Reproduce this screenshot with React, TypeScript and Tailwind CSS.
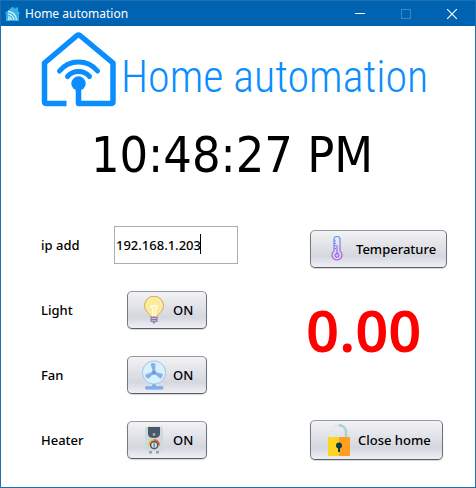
import type { ReactNode } from "react";

const labelFont = "font-['Noto_Sans','Open_Sans',sans-serif]";

function AppIcon() {
  return (
    <svg className="size-4" viewBox="0 0 16 16" aria-hidden="true">
      <path d="M1 6 7.500.8l3 2.200V1.500H13v3.600L15 7l-1 1v7H1V8L0 7z" fill="#35b2e2" />
      <g fill="none" stroke="#dff5fd" strokeWidth="1.300">
        <path d="M3 5.500a8.500 8.500 0 0 1 8.500 8.500M3 8.200A5.800 5.800 0 0 1 8.800 14M3 10.800A3.200 3.200 0 0 1 6.200 14" />
      </g>
      <circle cx="3.700" cy="13.300" r="1" fill="#dff5fd" />
    </svg>
  );
}

function HomeLogo() {
  return (
    <svg className="h-[76px] w-[76px] shrink-0" viewBox="0 0 76 76" fill="none" stroke="#0a8dff" aria-hidden="true">
      <path d="M25.500 72.500H5.500q-2 0-2-2V32L36 4.500q1.500-1 3 0l33 27.500V70.500q0 2-2 2H37.500V51" strokeWidth="5.500" strokeLinejoin="round" />
      <path d="M18.500 40a24.500 24.500 0 0 1 38 0" strokeWidth="5" strokeLinecap="round" />
      <path d="M26.500 45.500a14.500 14.500 0 0 1 22 0" strokeWidth="5" strokeLinecap="round" />
      <circle cx="37.500" cy="52.500" r="7.200" fill="#0a8dff" stroke="none" />
    </svg>
  );
}

function BulbIcon() {
  return (
    <svg className="h-7 w-7" viewBox="0 0 28 28" aria-hidden="true">
      <path d="M10.500 20.500c0-3-6-4.500-6-11a9.500 9.300 0 0 1 19 0c0 6.500-6 8-6 11z" fill="#fdeb9b" stroke="#c9ac61" strokeWidth="1" />
      <path d="M12.700 20.500v-7l-2-3M15.300 20.500v-7l2-3M10.500 9.500l2 1 1.500-1 1.500 1 2-1" fill="none" stroke="#fffdf0" strokeWidth="1.200" />
      <path d="M10.500 21h7v5h-2l-1 1.500h-1l-1-1.500h-2z" fill="#8b76a9" />
      <path d="M11.500 22.500h5M11.500 24.800h5" stroke="#d9cde8" strokeWidth=".9" />
    </svg>
  );
}

function FanIcon() {
  return (
    <svg className="h-[30px] w-7" viewBox="0 0 28 30" aria-hidden="true">
      <path d="M12.300 23h3.400v4h-3.400z" fill="#7eaee8" />
      <rect x="5.500" y="26.500" width="17.500" height="2.700" rx=".8" fill="#82b1ed" stroke="#6b9bd8" strokeWidth=".5" />
      <circle cx="14" cy="12.500" r="11.600" fill="#daf1fd" stroke="#9fc5ea" strokeWidth="1" />
      <g fill="#86b1ed">
        <path d="M13.300 12.500 10.500 4q2.800-2.200 5 0l-.5 8z" />
        <path d="m14 11.700 8.500 2q.8 3.300-2.200 5L14 13.500z" />
        <path d="m14 13.500-5.500 5.300Q5 18 5.300 14.500L13.500 11.500z" />
      </g>
      <circle cx="14" cy="12.500" r="2.200" fill="#6f9bda" />
    </svg>
  );
}

function HeaterIcon() {
  return (
    <svg className="h-[30px] w-7" viewBox="0 0 28 30" aria-hidden="true">
      <rect x="5" y="1.500" width="18" height="24" rx="3" fill="#d0d8da" />
      <path d="M8 2h12v6.500q0 4.500-6 4.500T8 8.500z" fill="#485967" />
      <circle cx="14" cy="9.500" r="1.400" fill="#9daeb6" />
      <path d="M9.500 20.500a4.800 4.800 0 0 1 4.700-5.500" fill="none" stroke="#ffb01f" strokeWidth="2" />
      <path d="M14.200 15a4.800 4.800 0 0 1 4.700 5.500" fill="none" stroke="#f0603f" strokeWidth="2" />
      <circle cx="14.200" cy="20" r="3.600" fill="#d7e0e3" stroke="#465963" strokeWidth="1.500" />
      <path d="M14.200 17.500v5" stroke="#7a8b92" strokeWidth="1.500" />
      <path d="M9 26h3v2.500H9zM16 26h3v2.500h-3z" fill="#93a2a7" />
    </svg>
  );
}

function ThermometerIcon() {
  return (
    <svg className="h-[26px] w-[26px]" viewBox="0 0 26 26" fill="none" aria-hidden="true">
      <defs>
        <linearGradient id="thermo" x1="0" y1="0" x2="0" y2="26" gradientUnits="userSpaceOnUse">
          <stop stopColor="#4c9df5" />
          <stop offset="1" stopColor="#c747ee" />
        </linearGradient>
      </defs>
      <path d="M10 15V3.500a3 3 0 0 1 6 0V15a5 5 0 1 1-6 0zM13 9v8M10 5h2M10 7.500h2M10 10h2M10 12.500h2" stroke="url(#thermo)" strokeWidth="1.200" />
      <circle cx="13" cy="19.300" r="2" fill="#d9b2f2" stroke="#9b50ea" />
    </svg>
  );
}

function LockIcon() {
  return (
    <svg className="h-8 w-[22px]" viewBox="0 0 22 32" aria-hidden="true">
      <path d="M4 13V7.500a7 6.500 0 0 1 14 0V13" fill="none" stroke="#dcebee" strokeWidth="2.400" />
      <path d="M11 1.200a7 6.500 0 0 1 7 6.300V13" fill="none" stroke="#acd0d8" strokeWidth="2.400" />
      <path d="M0 13h11v19H0z" fill="#ffd41e" />
      <path d="M11 13h11v19H11z" fill="#ff9f20" />
      <circle cx="11" cy="21.500" r="3" fill="#083f47" />
      <path d="M10 22h2v6h-2z" fill="#083f47" />
    </svg>
  );
}

function PanelButton({ icon, children, className }: { icon: ReactNode; children: ReactNode; className: string }) {
  return (
    <button
      type="button"
      className={`flex items-center rounded-[5px] border border-t-[#999ba0] border-r-[#6c6f77] border-b-[#595c65] border-l-[#777a82] bg-linear-to-b from-[#f3f3f5] via-[#d5d7df] via-70% to-[#eef0f5] text-[13px] leading-5 font-medium whitespace-nowrap text-black shadow-[0_1px_1px_#d7d7db] ${className}`}
    >
      {icon}
      <span>{children}</span>
    </button>
  );
}

function SwitchRow({ name, icon }: { name: string; icon: ReactNode }) {
  return (
    <div className="flex h-[65px] items-center">
      <span className="w-[86px]">{name}</span>
      <PanelButton icon={icon} className="h-[38px] w-20 gap-[5px] pl-3">
        ON
      </PanelButton>
    </div>
  );
}

export default function App() {
  return (
    <div className={`flex min-h-screen flex-col border border-[#1d70ad] bg-white text-black ${labelFont}`}>
      <header className="flex h-[25px] items-center bg-[#0063b1] pl-1 text-white">
        <AppIcon />
        <h1 className="ml-1 flex-1 text-xs">Home automation</h1>
        <button type="button" aria-label="Minimize" className="flex h-full w-[46px] items-center justify-center">
          <span className="h-px w-2.5 bg-white" />
        </button>
        <button type="button" aria-label="Maximize" disabled className="flex h-full w-[46px] items-center justify-center">
          <span className="size-2.5 border border-[#3d88c4]" />
        </button>
        <button type="button" aria-label="Close" className="flex h-full w-[46px] items-center justify-center">
          <svg className="size-2.5" viewBox="0 0 10 10" stroke="white" strokeWidth="1.200" aria-hidden="true">
            <path d="M0 0 10 10M10 0 0 10" />
          </svg>
        </button>
      </header>

      <main className="flex-1 pt-[5px]">
        <div className="flex items-center gap-1 pl-10">
          <HomeLogo />
          <span className="pt-4 font-['Liberation_Sans_Narrow','Roboto_Condensed',sans-serif] text-[44px] leading-[60px] font-light whitespace-nowrap text-[#0a8dff]">
            Home automation
          </span>
        </div>

        <div className="mt-[18px] pr-3 text-center font-['DejaVu_Sans_Condensed','DejaVu_Sans',sans-serif] text-[50px] leading-[60px]">
          10:48:27 PM
        </div>

        <div className="mt-[27px] flex justify-between pr-7 pl-10">
          <div className="text-[13px] leading-5 font-medium">
            <div className="flex h-[65px] items-center">
              <label htmlFor="ip" className="w-[73px]">
                ip add
              </label>
              <div className="relative">
                <input
                  id="ip"
                  type="text"
                  defaultValue="192.168.1.203"
                  className="h-[38px] w-[124px] border border-[#acacac] bg-white px-px text-[13px] caret-transparent outline-none"
                />
                <span className="absolute top-2 left-[86px] h-5 w-px bg-black" />
              </div>
            </div>
            <SwitchRow name="Light" icon={<BulbIcon />} />
            <SwitchRow name="Fan" icon={<FanIcon />} />
            <SwitchRow name="Heater" icon={<HeaterIcon />} />
          </div>

          <div className="flex w-[137px] flex-col items-start justify-between pt-[18px] pb-3">
            <PanelButton icon={<ThermometerIcon />} className="h-[38px] w-full gap-[6px] pl-[13px]">
              Temperature
            </PanelButton>
            <output className="-ml-1 pb-7 text-[58px] leading-[70px] font-semibold text-[#ff0000]">0.00</output>
            <PanelButton icon={<LockIcon />} className="h-10 w-[133px] gap-2 pl-[17px]">
              Close home
            </PanelButton>
          </div>
        </div>
      </main>
    </div>
  );
}
